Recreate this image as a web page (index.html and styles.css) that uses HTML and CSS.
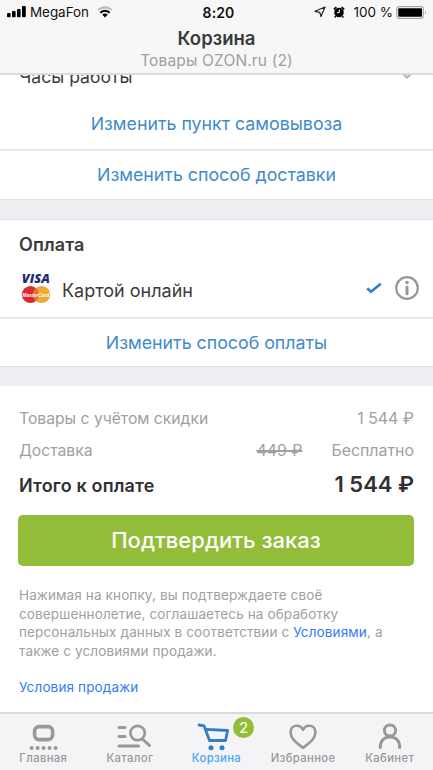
FILE: index.html
```html
<!DOCTYPE html>
<html lang="ru">
<head>
<meta charset="utf-8">
<title>Корзина</title>
<link rel="stylesheet" href="styles.css">
</head>
<body>
<div class="app">
  <header class="header">
    <div class="status">
      <div class="status-left">
        <svg class="signal" width="20" height="12" viewBox="0 0 20 12"><rect x="0" y="7" width="3.6" height="4.2" rx="1"/><rect x="5" y="5" width="3.6" height="6.2" rx="1"/><rect x="10" y="3" width="3.6" height="8.2" rx="1"/><rect x="15" y="0" width="3.8" height="11.2" rx="1"/></svg>
        <span class="carrier">MegaFon</span>
        <svg class="wifi" width="16" height="12" viewBox="0 0 16 12" fill="none"><path d="M1 4Q8-1.3 15 4" stroke="#b9b9b9" stroke-width="2"/><path d="M3.3 6.7Q8 2.8 12.7 6.7" stroke="#000" stroke-width="2.1"/><path d="M5.2 8.6Q8 6.6 10.8 8.6L8 11.4Z" fill="#000"/></svg>
      </div>
      <span class="clock">8:20</span>
      <div class="status-right">
        <svg class="locate" width="12" height="12" viewBox="0 0 12 12" fill="none" stroke="#222" stroke-width="1.2" stroke-linejoin="round"><path d="M11 1 7 10.5 5.8 6.4 1 5.3Z"/></svg>
        <svg class="alarm" width="12" height="12" viewBox="0 0 12 12"><circle cx="6" cy="6.5" r="4.8"/><path d="M.8 3.4 3.4 1M11.2 3.4 8.6 1M2.6 10.2 1.6 11.5M9.4 10.2l1 1.3" stroke="#000" stroke-width="1.5"/><path d="M6.3 3.6v3H4" fill="none" stroke="#fff" stroke-width="1"/></svg>
        <span class="percent">100 %</span>
        <svg class="battery" width="31" height="13" viewBox="0 0 31 13"><rect x=".7" y=".7" width="26.6" height="11.6" rx="2.6" fill="#fff" stroke="#a6a6a6" stroke-width="1.2"/><rect x="2.2" y="2.2" width="23.8" height="8.6" rx="1" fill="#000"/><path d="M29 4.5q1.6 2 0 4Z" fill="#999"/></svg>
      </div>
    </div>
    <h1 class="title">Корзина</h1>
    <p class="subtitle">Товары OZON.ru (2)</p>
  </header>

  <main class="content">
    <section class="card">
      <div class="hours"><span class="hours-text">Часы работы</span>
        <svg class="chevron" width="12" height="8" viewBox="0 0 12 8" fill="none" stroke="#b4b4b4" stroke-width="2.2"><path d="m1.5 1.5 4.5 4 4.5-4"/></svg>
      </div>
      <a class="action pickup">Изменить пункт самовывоза</a>
      <a class="action delivery">Изменить способ доставки</a>
    </section>

    <section class="card payment">
      <h2 class="heading">Оплата</h2>
      <div class="method">
        <svg class="brands" width="30" height="31" viewBox="0 0 30 31">
          <text class="visa" x="0.8" y="10.2" textLength="28" lengthAdjust="spacingAndGlyphs">VISA</text>
          <circle cx="9.4" cy="21.5" r="8.6" fill="#d92b2c"/><circle cx="20.6" cy="21.5" r="8.6" fill="#edaa32"/>
          <path d="M15 15a8.6 8.6 0 0 1 0 13a8.6 8.6 0 0 1 0-13Z" fill="#e57030"/>
          <text class="mc" x="1.6" y="23.8" textLength="26.5" lengthAdjust="spacingAndGlyphs">MasterCard</text>
        </svg>
        <span class="method-name">Картой онлайн</span>
        <svg class="check" width="16" height="12" viewBox="0 0 16 12" fill="none" stroke="#2f80c7" stroke-width="2.6"><path d="m1.2 6.2 3.8 3.5 9.8-8"/></svg>
        <svg class="info" width="24" height="24" viewBox="0 0 24 24"><circle cx="12" cy="12" r="10.8" fill="none" stroke="#989898" stroke-width="2.2"/><circle cx="12" cy="6.5" r="1.8" fill="#989898"/><path d="M12 11v6.8" stroke="#989898" stroke-width="3" stroke-linecap="round"/></svg>
      </div>
      <a class="action pay">Изменить способ оплаты</a>
    </section>

    <section class="card summary">
      <div class="line"><span class="label">Товары с учётом скидки</span><span>1 544 ₽</span></div>
      <div class="line"><span class="label">Доставка</span><span class="ship-sum"><s>449 ₽</s><span>Бесплатно</span></span></div>
      <div class="line total"><span class="total-label">Итого к оплате</span><span class="total-sum">1 544 ₽</span></div>
      <button class="confirm">Подтвердить заказ</button>
      <p class="legal">Нажимая на кнопку, вы подтверждаете своё<br>совершеннолетие, соглашаетесь на обработку<br>персональных данных в соответствии с <a>Условиями</a>, а<br>также с условиями продажи.</p>
      <a class="terms">Условия продажи</a>
    </section>
  </main>

  <nav class="tabs">
    <a class="tab"><svg width="36" height="30" viewBox="0 0 36 30"><rect x="9.6" y="3.6" width="18" height="13" rx="4.5" fill="none" stroke="#989898" stroke-width="3.6"/><g fill="#989898"><circle cx="6.6" cy="25" r="2"/><circle cx="12.6" cy="25" r="2"/><circle cx="18.6" cy="25" r="2"/><circle cx="24.6" cy="25" r="2"/><circle cx="30.6" cy="25" r="2"/></g></svg><span>Главная</span></a>
    <a class="tab"><svg width="36" height="30" viewBox="0 0 36 30" fill="none" stroke="#989898" stroke-width="3" stroke-linecap="round"><path d="M7 4.5h6M7 13.5h6M7 23h19.5M30.5 16l7 6.5"/><circle cx="25.6" cy="10" r="7.2" stroke-width="2.7"/></svg><span>Каталог</span></a>
    <a class="tab active"><svg width="36" height="30" viewBox="0 0 36 30" fill="none" stroke="#2f80c7" stroke-width="3" stroke-linecap="round" stroke-linejoin="round"><path d="M1 2 6 2.8 11.5 17.5H27.5L29.7 7.5 8.3 6.4" stroke-width="2.8"/><g fill="#2f80c7" stroke="none"><circle cx="13" cy="24.8" r="2.5"/><circle cx="24" cy="24.8" r="2.5"/></g></svg><span>Корзина</span><b class="badge">2</b></a>
    <a class="tab"><svg width="36" height="30" viewBox="0 0 36 30" fill="none" stroke="#989898" stroke-width="2.6" stroke-linejoin="round"><path d="M18 24.8C11 19.4 5.6 15.8 5.6 9.3C5.6 5.3 8.4 2.7 11.7 2.7C14.5 2.7 16.8 4.2 18 6.8C19.2 4.2 21.5 2.7 24.3 2.7C27.6 2.7 30.4 5.3 30.4 9.3C30.4 15.8 25 19.4 18 24.8Z"/></svg><span>Избранное</span></a>
    <a class="tab"><svg width="36" height="30" viewBox="0 0 36 30" fill="none" stroke="#989898" stroke-width="3" stroke-linecap="round"><circle cx="18" cy="7.5" r="5.6"/><path d="M8.3 24.5c0-7 4-10.5 9.7-10.5s9.7 3.5 9.7 10.5"/></svg><span>Кабинет</span></a>
  </nav>
</div>
</body>
</html>
```
FILE: styles.css
```css
* { box-sizing: border-box; margin: 0; padding: 0; }
body { font-family: Inter, "Liberation Sans", sans-serif; background: #fff; color: #3b3b3d; }
svg { display: block; flex: none; overflow: visible; }
.app { width: 433px; height: 770px; display: flex; flex-direction: column; overflow: hidden; }
.header { height: 75px; flex: none; background: #f7f7f7; border-bottom: 2px solid #dcdcdc; text-align: center; position: relative; z-index: 1; }
.status { height: 24px; display: grid; grid-template-columns: 1fr auto 1fr; align-items: center; padding: 0 6px 0 7px; color: #111; font-size: 14px; }
.status-left, .status-right { display: flex; align-items: center; }
.status-right { justify-content: flex-end; }
.carrier { margin: 0 8px 0 3px; font-size: 13.4px; }
.clock { margin: 0 -1px 0 1px; padding-left: 1px; font-weight: 600; font-size: 14px; letter-spacing: .1px; }
.alarm { margin: 0 8px 0 7px; }
.percent { margin-right: 3px; font-size: 13.5px; }
.title { font-size: 18.5px; line-height: 28px; font-weight: 600; }
.subtitle { font-size: 15.5px; line-height: 17px; color: #a0a0a0; letter-spacing: .15px; }
.content { flex: 1; min-height: 0; background: #ededf2; }
.card { background: #fff; border-bottom: 1px solid #e0e0e2; }
.hours { height: 24px; margin-top: -11px; display: flex; justify-content: space-between; align-items: center; padding: 0 20px 0 19px; font-size: 17.6px; }
.action { display: flex; height: 49px; align-items: center; justify-content: center; padding-bottom: 1px; color: #408bca; font-size: 17.8px; border-top: 2px solid #e8e8e8; }
.pickup { height: 61px; border: 0; padding-top: 11px; }
.delivery { height: 50px; padding-bottom: 2px; }
.payment { margin-top: 19px; border-top: 1px solid #e0e0e2; }
.heading { padding: 11px 19px 0; height: 40px; font-size: 18px; line-height: 28px; font-weight: 600; letter-spacing: .1px; }
.method { display: flex; height: 57px; align-items: center; padding: 0 14px 2px 21px; }
.brands { margin-top: 2px; }
.method-name { margin: 5px auto 0 11px; font-size: 18px; }
.check { margin-right: 13px; }
.visa { font: italic 800 13px "Open Sans", sans-serif; fill: #222a78; }
.mc { font: italic 700 5.8px "Liberation Sans", sans-serif; fill: #fff; }
.summary { margin-top: 19px; height: 328px; padding: 16px 19px 0 19px; border-bottom: 0; }
.line { height: 32px; display: flex; justify-content: space-between; align-items: center; color: #a0a0a0; font-size: 15.9px; }
.label { font-size: 15.7px; }
.ship-sum { display: flex; gap: 29px; }
.ship-sum s { text-decoration-thickness: 2px; }
.line.total { height: 36px; padding-top: 3px; color: #303033; font-weight: 600; font-size: 18px; }
.total-label { letter-spacing: .15px; }
.total-sum { font-size: 22px; margin-top: -3px; }
.confirm { display: block; width: 396px; height: 51px; margin: 13px 0 0 -1px; padding-bottom: 1px; border: 0; border-radius: 5px; background: #91bd38; color: #fff; font: 500 22px Inter, sans-serif; }
.legal { margin-top: 20px; font-size: 13.5px; line-height: 18.5px; color: #a0a0a0; letter-spacing: .13px; white-space: nowrap; }
.legal a, .terms { color: #347bf5; }
.terms { display: block; margin-top: 18px; font-size: 13.5px; line-height: 19px; letter-spacing: .15px; }
.tabs { height: 58px; flex: none; background: #f4f4f6; border-top: 2px solid #dadada; display: grid; grid-template-columns: repeat(5, 1fr); }
.tab { position: relative; display: flex; flex-direction: column; align-items: center; padding-top: 9px; color: #989898; font-size: 11.3px; line-height: 14px; font-weight: 500; letter-spacing: .35px; }
.tab span { margin-top: -2px; }
.active { color: #4ba5ec; }
.badge { position: absolute; left: 60px; top: 3px; width: 21px; height: 21px; border-radius: 50%; background: #91bd38; color: #fff; font-size: 15px; font-weight: 400; line-height: 21px; text-align: center; letter-spacing: 0; }
```
